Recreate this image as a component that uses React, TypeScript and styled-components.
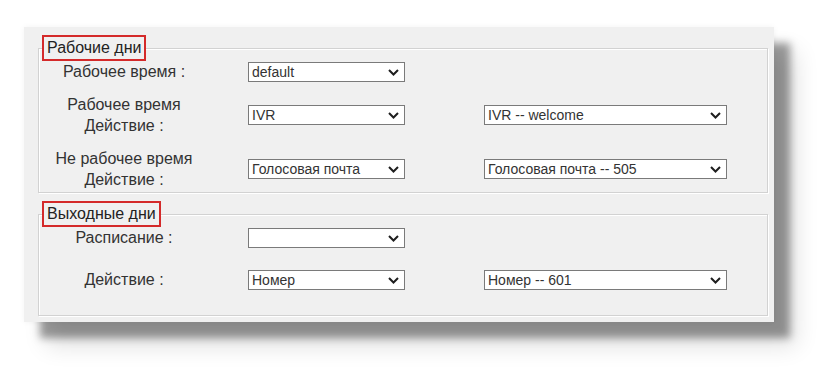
import React from 'react';
import styled, { createGlobalStyle } from 'styled-components';

const GlobalStyle = createGlobalStyle`
	html, body {
		margin: 0;
		padding: 0;
		background: #ffffff;
	}
	body {
		font-family: "Liberation Sans", Arial, sans-serif;
	}
`

const Page = styled.div`
	width: 840px;
	height: 387px;
	box-sizing: border-box;
	padding: 27px 0 0 24px;
	overflow: hidden;
`

const Panel = styled.div`
	width: 750px;
	box-sizing: border-box;
	padding: 8px 6px 6px 14px;
	background: #f0f0f0;
	box-shadow:
		0 0 6px rgba(0, 0, 0, 0.05),
		16px 16px 8px rgba(0, 0, 0, 0.38),
		22px 24px 22px rgba(0, 0, 0, 0.12);
`

const Group = styled.fieldset<{ $gap: number; $bottom: number }>`
	margin: 0;
	padding: 0 0 ${p => p.$bottom}px 0;
	border: 1px solid #d2d2d2;
	box-shadow: inset 1px 1px 0 #ffffff, 1px 1px 0 #ffffff;
	display: flex;
	flex-direction: column;
	gap: ${p => p.$gap}px;

	& + & {
		margin-top: 8px;
	}
`

const Legend = styled.legend`
	margin-left: 3px;
	padding: 0 3px;
	border: 2px solid #d42a2a;
	background: #f0f0f0;
	font-size: 16px;
	line-height: 22px;
	color: #222;
`

const Row = styled.div`
	display: grid;
	grid-template-columns: 168px 196px 243px;
	column-gap: 40px;
	align-items: center;
	margin-left: 1px;
`

const Label = styled.div`
	text-align: center;
	font-size: 16px;
	line-height: 21px;
	color: #333;
`

const SelectBox = styled.div<{ $width: number }>`
	position: relative;
	width: ${p => p.$width}px;
	height: 20px;
`

const NativeSelect = styled.select`
	appearance: none;
	-webkit-appearance: none;
	width: 100%;
	height: 100%;
	box-sizing: border-box;
	margin: 0;
	padding: 0 20px 0 3px;
	border: 1px solid #7a7a7a;
	border-radius: 0;
	background: #ffffff;
	font-family: "Liberation Sans", Arial, sans-serif;
	font-size: 14px;
	color: #333;
	outline: none;
`

const Chevron = styled.svg`
	position: absolute;
	right: 6px;
	top: 7px;
	pointer-events: none;
`

function Select({ value, width }: { value: string; width: number }) {
	return (
		<SelectBox $width={width}>
			<NativeSelect defaultValue={value}>
				<option value={value}>{value}</option>
			</NativeSelect>
			<Chevron width="11" height="7" viewBox="0 0 11 7">
				<polyline points="1,1 5.5,5.5 10,1" fill="none" stroke="#1e1e1e" strokeWidth="2" />
			</Chevron>
		</SelectBox>
	)
}

export default function App() {
	return (
		<Page>
			<GlobalStyle />
			<Panel>
				<Group $gap={12} $bottom={2}>
					<Legend>Рабочие дни</Legend>
					<Row>
						<Label>Рабочее время :</Label>
						<Select value="default" width={157} />
					</Row>
					<Row>
						<Label>Рабочее время<br />Действие :</Label>
						<Select value="IVR" width={157} />
						<Select value="IVR -- welcome" width={243} />
					</Row>
					<Row>
						<Label>Не рабочее время<br />Действие :</Label>
						<Select value="Голосовая почта" width={157} />
						<Select value="Голосовая почта -- 505" width={243} />
					</Row>
				</Group>
				<Group $gap={21} $bottom={25}>
					<Legend>Выходные дни</Legend>
					<Row>
						<Label>Расписание :</Label>
						<Select value="" width={157} />
					</Row>
					<Row>
						<Label>Действие :</Label>
						<Select value="Номер" width={157} />
						<Select value="Номер -- 601" width={243} />
					</Row>
				</Group>
			</Panel>
		</Page>
	)
}
